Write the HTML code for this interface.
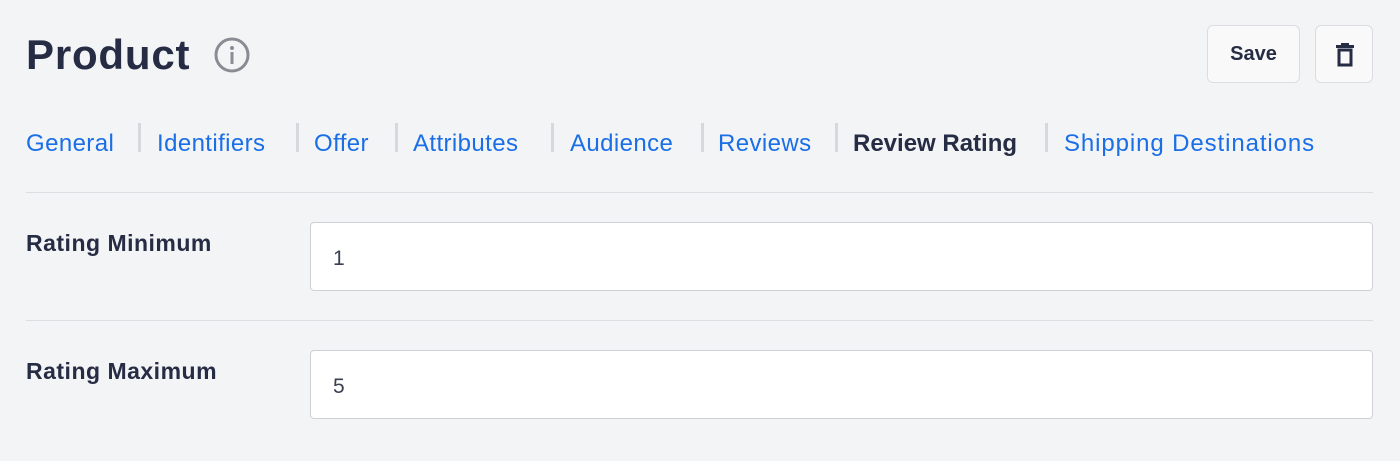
<!DOCTYPE html>
<html><head><style>
*{margin:0;padding:0;box-sizing:border-box}
body{width:1400px;height:461px;background:#f3f4f6;font-family:"Liberation Sans",sans-serif;position:relative;overflow:hidden;color:#262c44}
.a{position:absolute;white-space:nowrap}
.tab{position:absolute;top:130px;font-size:24px;color:#1a6ee6;letter-spacing:0.4px;white-space:nowrap}
.sep{position:absolute;top:123px;width:3px;height:29px;background:#d6d8dc}
.btn{position:absolute;top:25px;height:58px;border:1px solid #dcdde0;border-radius:6px;background:#f9f9fa}
.lbl{position:absolute;left:26px;font-size:23px;font-weight:bold;color:#262c44;letter-spacing:0.5px;white-space:nowrap}
.inp{position:absolute;left:310px;width:1063px;height:69px;border:1px solid #cfd1d6;border-radius:4px;background:#fff;font-size:21px;color:#3a3f50;padding:24px 0 0 22px}
.hr{position:absolute;left:26px;width:1347px;height:1px;background:#dcdde0}
</style></head><body>
<div class="a" style="left:26px;top:31px;font-size:42px;font-weight:bold;color:#262c44;letter-spacing:0.8px">Product</div>
<svg class="a" style="left:213px;top:36px" width="38" height="38" viewBox="0 0 38 38"><circle cx="19" cy="19" r="16" fill="none" stroke="#8a8c93" stroke-width="3"/><circle cx="19" cy="12" r="2" fill="#8a8c93"/><rect x="17.5" y="16" width="3" height="12" fill="#8a8c93"/></svg>
<div class="btn" style="left:1207px;width:93px"><div style="text-align:center;line-height:56px;font-size:20px;font-weight:bold;color:#262c44">Save</div></div>
<div class="btn" style="left:1315px;width:58px"><svg style="position:absolute;left:19px;top:17px" width="20" height="24" viewBox="0 0 20 24"><rect x="1" y="2" width="18" height="3" fill="#262c44"/><rect x="6" y="0" width="8" height="3" fill="#262c44"/><rect x="4" y="7" width="12" height="15" fill="none" stroke="#262c44" stroke-width="3"/></svg></div>
<div class="tab" style="left:26px">General</div><div class="sep" style="left:138px"></div>
<div class="tab" style="left:157px">Identifiers</div><div class="sep" style="left:296px"></div>
<div class="tab" style="left:314px">Offer</div><div class="sep" style="left:395px"></div>
<div class="tab" style="left:413px">Attributes</div><div class="sep" style="left:551px"></div>
<div class="tab" style="left:570px">Audience</div><div class="sep" style="left:701px"></div>
<div class="tab" style="left:718px">Reviews</div><div class="sep" style="left:835px"></div>
<div class="tab" style="left:853px;color:#262c44;font-weight:bold;letter-spacing:0">Review Rating</div><div class="sep" style="left:1045px"></div>
<div class="tab" style="left:1064px;letter-spacing:0.9px">Shipping Destinations</div>
<div class="hr" style="top:192px"></div>
<div class="lbl" style="top:230px">Rating Minimum</div>
<div class="inp" style="top:222px">1</div>
<div class="hr" style="top:320px"></div>
<div class="lbl" style="top:358px">Rating Maximum</div>
<div class="inp" style="top:350px">5</div>
</body></html>
